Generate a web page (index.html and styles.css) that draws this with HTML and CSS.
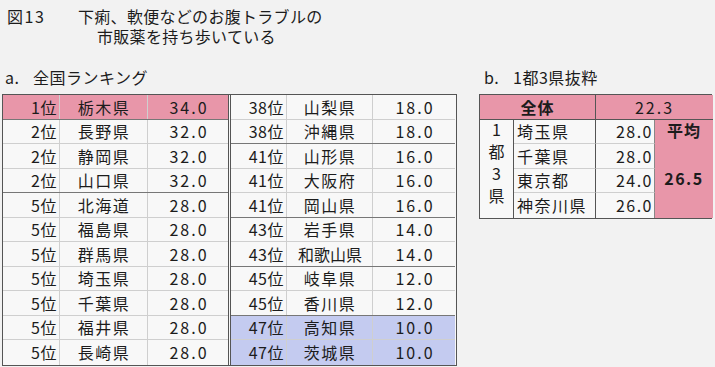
FILE: index.html
```html
<!DOCTYPE html>
<html lang="ja">
<head>
<meta charset="utf-8">
<link rel="stylesheet" href="styles.css">
</head>
<body>
<div class="title">
  <div class="title-line"><span class="fig">図13</span><span>下痢、軟便などのお腹トラブルの</span></div>
  <div class="title-line indent">市販薬を持ち歩いている</div>
</div>
<div class="panels">
  <section class="panel-a">
    <div class="caption"><span class="cap-mark">a.</span>全国ランキング</div>
    <div class="rank">
      <div class="grid left">
        <div class="row pink sep"><span class="c r">1位</span><span class="c n">栃木県</span><span class="c v">34.0</span></div>
        <div class="row"><span class="c r">2位</span><span class="c n">長野県</span><span class="c v">32.0</span></div>
        <div class="row"><span class="c r">2位</span><span class="c n">静岡県</span><span class="c v">32.0</span></div>
        <div class="row sep"><span class="c r">2位</span><span class="c n">山口県</span><span class="c v">32.0</span></div>
        <div class="row"><span class="c r">5位</span><span class="c n">北海道</span><span class="c v">28.0</span></div>
        <div class="row"><span class="c r">5位</span><span class="c n">福島県</span><span class="c v">28.0</span></div>
        <div class="row"><span class="c r">5位</span><span class="c n">群馬県</span><span class="c v">28.0</span></div>
        <div class="row"><span class="c r">5位</span><span class="c n">埼玉県</span><span class="c v">28.0</span></div>
        <div class="row"><span class="c r">5位</span><span class="c n">千葉県</span><span class="c v">28.0</span></div>
        <div class="row"><span class="c r">5位</span><span class="c n">福井県</span><span class="c v">28.0</span></div>
        <div class="row last"><span class="c r">5位</span><span class="c n">長崎県</span><span class="c v">28.0</span></div>
      </div>
      <div class="grid right">
        <div class="row"><span class="c r">38位</span><span class="c n">山梨県</span><span class="c v">18.0</span></div>
        <div class="row sep"><span class="c r">38位</span><span class="c n">沖縄県</span><span class="c v">18.0</span></div>
        <div class="row"><span class="c r">41位</span><span class="c n">山形県</span><span class="c v">16.0</span></div>
        <div class="row"><span class="c r">41位</span><span class="c n">大阪府</span><span class="c v">16.0</span></div>
        <div class="row sep"><span class="c r">41位</span><span class="c n">岡山県</span><span class="c v">16.0</span></div>
        <div class="row"><span class="c r">43位</span><span class="c n">岩手県</span><span class="c v">14.0</span></div>
        <div class="row sep"><span class="c r">43位</span><span class="c n tight">和歌山県</span><span class="c v">14.0</span></div>
        <div class="row"><span class="c r">45位</span><span class="c n">岐阜県</span><span class="c v">12.0</span></div>
        <div class="row sep"><span class="c r">45位</span><span class="c n">香川県</span><span class="c v">12.0</span></div>
        <div class="row blue"><span class="c r">47位</span><span class="c n">高知県</span><span class="c v">10.0</span></div>
        <div class="row blue last"><span class="c r">47位</span><span class="c n">茨城県</span><span class="c v">10.0</span></div>
      </div>
    </div>
  </section>
  <section class="panel-b">
    <div class="caption"><span class="cap-mark b">b.</span>1都3県抜粋</div>
    <div class="excerpt">
      <div class="x-head x-all">全体</div>
      <div class="x-head x-total">22.3</div>
      <div class="x-group">1<br>都<br>3<br>県</div>
      <div class="x-name">埼玉県</div><div class="x-val">28.0</div>
      <div class="x-avg-label">平均</div>
      <div class="x-name">千葉県</div><div class="x-val">28.0</div>
      <div class="x-avg">26.5</div>
      <div class="x-name">東京都</div><div class="x-val">24.0</div>
      <div class="x-name x-last">神奈川県</div><div class="x-val x-last">26.0</div>
    </div>
  </section>
</div>
</body>
</html>
```
FILE: styles.css
```css
* { box-sizing: border-box; }
html, body { margin: 0; padding: 0; }
body {
  background: #f2f2f2;
  color: #1c1c1c;
  font-family: "Noto Sans CJK JP", "Noto Sans", sans-serif;
  font-size: 16px;
  width: 715px;
  height: 367px;
  overflow: hidden;
}
.title { padding: 6px 0 0 7px; }
.title-line { display: flex; height: 20px; line-height: 20px; letter-spacing: 0.3px; }
.fig { width: 71px; letter-spacing: 1.5px; }
.indent { padding-left: 90px; }

.panels { display: flex; margin-top: 22px; }
.panel-a { margin-left: 2px; width: 455px; }
.panel-b { margin-left: 22px; width: 233px; }
.caption { height: 19px; line-height: 19px; margin-bottom: 7px; padding-left: 3px; letter-spacing: 0.5px; }
.cap-mark { display: inline-block; width: 28px; }
.cap-mark.b { width: 31px; padding-left: 2px; }

.rank {
  display: flex;
  border: 1px solid #555;
  background: #f8f8f8;
}
.grid { display: flex; flex-direction: column; }
.grid.left { border-right: 3px double #555; }
.row { display: grid; height: 24.5px; border-bottom: 1px solid #cfcfcf; }
.left .row { grid-template-columns: 57px 88px 80px; }
.right .row { grid-template-columns: 56px 86px 82px; }
.row.sep { border-bottom-color: #777; }
.row.last { border-bottom: none; }
.row.pink { background: #e896a9; }
.row.blue { background: #c4cbf0; }
.c {
  display: flex;
  align-items: center;
  line-height: 1;
  border-right: 1px solid #cfcfcf;
  white-space: nowrap;
}
.c.v { border-right: none; justify-content: center; letter-spacing: 2px; padding-left: 2px; }
.c.r { justify-content: flex-end; padding-right: 2px; letter-spacing: 0.5px; }
.c.n { justify-content: center; letter-spacing: 1.5px; padding-left: 1px; }
.c.n.tight { letter-spacing: 0; }

.excerpt {
  display: grid;
  grid-template-columns: 34px 82px 59px 58px;
  grid-template-rows: repeat(5, 24.5px);
  border: 1px solid #555;
  background: #f8f8f8;
}
.excerpt > div { display: flex; align-items: center; line-height: 1; }
.x-head {
  background: #e896a9;
  border-bottom: 1px solid #555;
  justify-content: center;
}
.x-all { grid-column: 1 / 3; font-weight: bold; letter-spacing: 1px; border-right: 1px solid #555; }
.x-total { grid-column: 3 / 5; letter-spacing: 2px; }
.x-group {
  grid-column: 1; grid-row: 2 / 6;
  flex-direction: column; justify-content: center;
  line-height: 22px !important;
  text-align: center;
  border-right: 1px solid #555;
  padding-bottom: 14px;
}
.x-name { grid-column: 2; padding-left: 3px; letter-spacing: 1.5px; border-right: 1px solid #555; border-bottom: 1px solid #cfcfcf; }
.x-val { grid-column: 3; justify-content: flex-end; padding-right: 1px; letter-spacing: 1.5px; border-bottom: 1px solid #cfcfcf; border-right: 1px solid #888; }
.x-last { border-bottom: none; }
.x-avg-label { grid-column: 4; grid-row: 2; background: #e896a9; justify-content: center; font-weight: bold; letter-spacing: 1px; padding-bottom: 3px; }
.x-avg { grid-column: 4; grid-row: 3 / 6; background: #e896a9; justify-content: center; font-weight: bold; letter-spacing: 1.5px; padding-bottom: 5px; }
```
